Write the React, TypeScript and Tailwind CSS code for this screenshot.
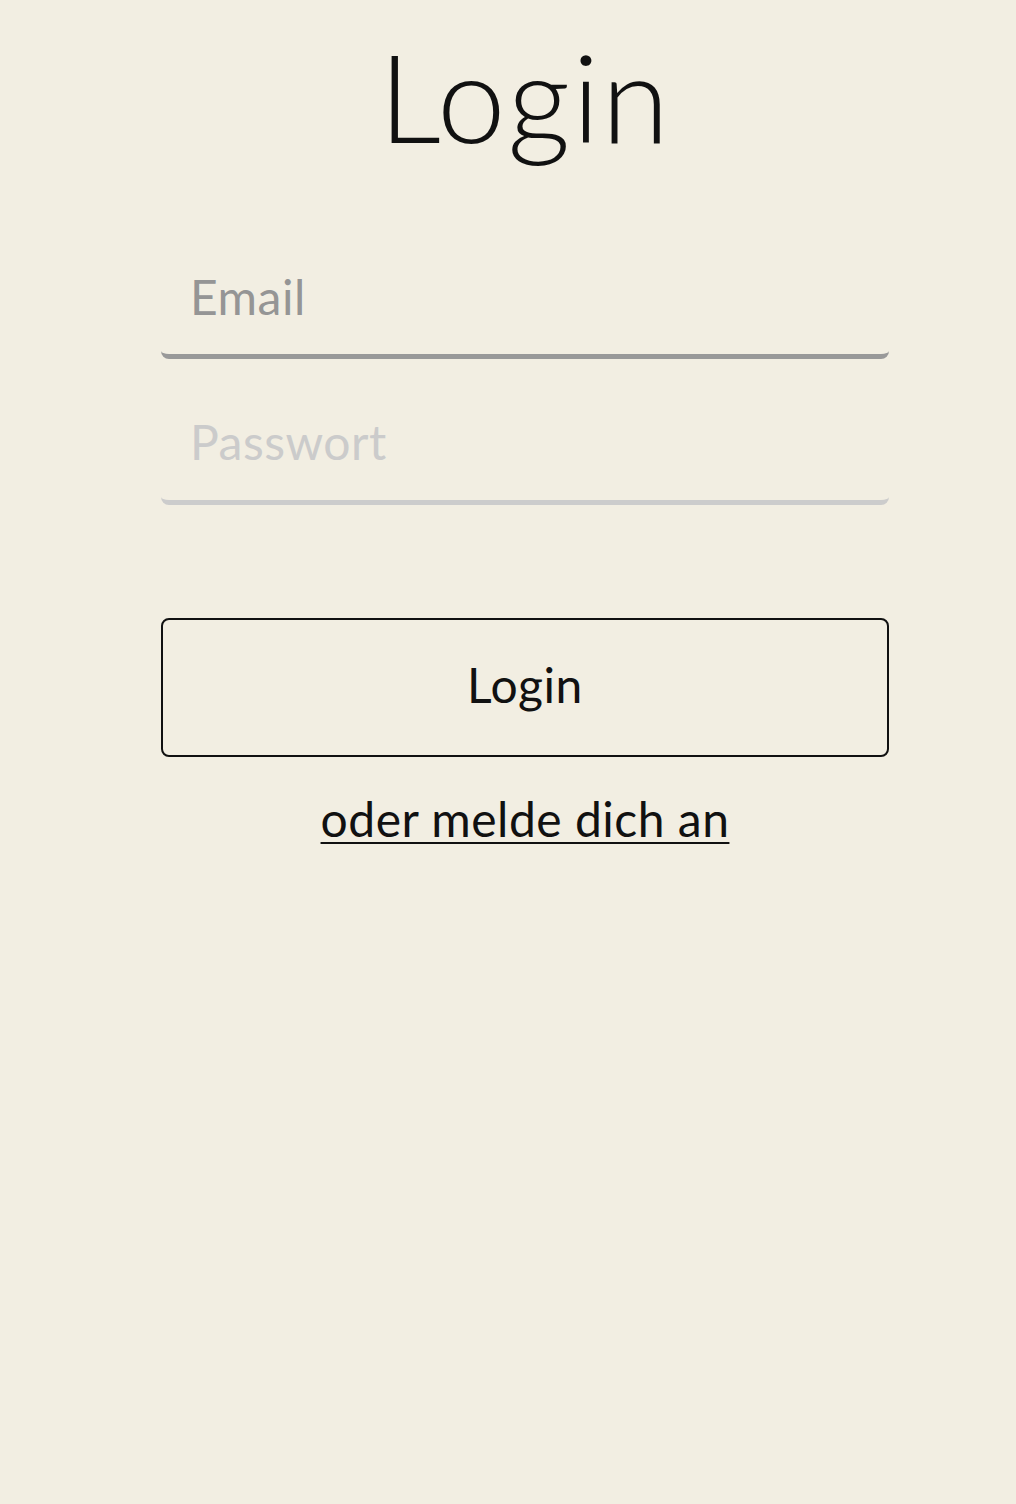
import React from "react";

export default function App() {
  const font = { fontFamily: "Lato, 'Noto Sans', sans-serif" };
  return (
    <div className="min-h-[1504px] w-full bg-[#f2eee2]" style={font}>
      <div className="ml-[161px] w-[728px] flex flex-col">
        <h1 className="mt-[26px] h-[140px] text-center text-[123px] leading-[140px] tracking-[2px] font-light text-[#111]">
          Login
        </h1>
        <input
          type="email"
          placeholder="Email"
          className="mt-[84px] h-[109px] w-full rounded-lg border-b-[5px] border-[#999] bg-transparent px-[29px] pb-[12px] text-[48px] tracking-[0.5px] text-[#111] outline-none placeholder:text-[#959595]"
        />
        <input
          type="password"
          placeholder="Passwort"
          className="mt-[37px] h-[109px] w-full rounded-lg border-b-[5px] border-[#ccc] bg-transparent px-[29px] pb-[14px] text-[48px] tracking-[0.5px] text-[#111] outline-none placeholder:text-[#cbcbcb]"
        />
        <button className="mt-[113px] h-[139px] w-full rounded-lg border-2 border-[#111] bg-transparent pb-[6px] text-[48px] tracking-[0.5px] text-[#111]">
          Login
        </button>
        <div className="mt-[30px] text-center">
          <a href="#" className="text-[48px] leading-[64px] tracking-[0.5px] text-[#111] underline decoration-2 underline-offset-[5px]">
            oder melde dich an
          </a>
        </div>
      </div>
    </div>
  );
}
